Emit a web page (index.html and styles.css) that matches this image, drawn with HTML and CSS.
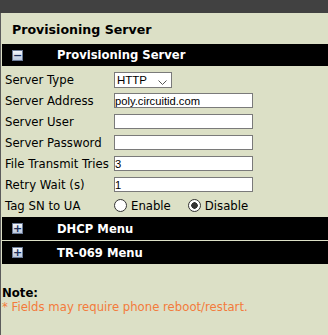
FILE: index.html
```html
<!DOCTYPE html>
<html lang="en">
<head>
  <meta charset="UTF-8" />
  <title>Provisioning Server</title>
  <link rel="stylesheet" href="styles.css">
</head>
<body>

  <div class="topbar"></div>

  <div class="page">
    <h1 class="page-title">Provisioning Server</h1>

    <div class="menu-bar">
      <span class="toggle">&minus;</span>
      <span class="menu-title">Provisioning Server</span>
    </div>

    <div class="form">
      <div class="row">
        <label>Server Type</label>
        <span class="select-wrap">
          <select class="select">
            <option>HTTP</option>
          </select>
          <svg class="chevron" width="9" height="5" viewBox="0 0 9 5"><path d="M0.5 0.5 L4.5 4.5 L8.5 0.5" fill="none" stroke="#555" stroke-width="1"/></svg>
        </span>
      </div>
      <div class="row">
        <label>Server Address</label>
        <input class="field" type="text" value="poly.circuitid.com">
      </div>
      <div class="row">
        <label>Server User</label>
        <input class="field" type="text" value="">
      </div>
      <div class="row">
        <label>Server Password</label>
        <input class="field" type="text" value="">
      </div>
      <div class="row">
        <label>File Transmit Tries</label>
        <input class="field" type="text" value="3">
      </div>
      <div class="row">
        <label>Retry Wait (s)</label>
        <input class="field" type="text" value="1">
      </div>
      <div class="row">
        <label>Tag SN to UA</label>
        <div class="radios">
          <label class="radio"><input type="radio" name="tagsn"> Enable</label>
          <label class="radio"><input type="radio" name="tagsn" checked> Disable</label>
        </div>
      </div>
    </div>

    <div class="menu-bar menu-small">
      <span class="toggle">+</span>
      <span class="menu-title">DHCP Menu</span>
    </div>
    <div class="menu-bar menu-small">
      <span class="toggle">+</span>
      <span class="menu-title">TR-069 Menu</span>
    </div>

    <div class="note">
      <div class="note-title">Note:</div>
      <div class="note-text">* Fields may require phone reboot/restart.</div>
    </div>
  </div>

</body>
</html>
```

FILE: styles.css
```css
html, body {
  margin: 0;
  padding: 0;
  height: 100%;
  background-color: #dce0c6;
  font-family: 'DejaVu Sans', Verdana, sans-serif;
  font-size: 11.7px;
  color: #000;
  overflow: hidden;
}

.topbar {
  height: 13px;
  background-color: #414141;
}

.page {
  border-left: 1px solid #5c5c5c;
  padding-left: 1px;
  height: 100%;
}

.page-title {
  margin: 0;
  padding: 9px 0 0 10px;
  height: 22px;
  font-size: 12.6px;
  font-weight: bold;
  color: #000;
}

.menu-bar {
  display: flex;
  align-items: center;
  height: 22px;
  background-color: #000;
  color: #fff;
  font-weight: bold;
  font-size: 11.6px;
}

.menu-small {
  height: 23px;
  margin-bottom: 1px;
}

.toggle {
  width: 9px;
  height: 9px;
  margin-left: 10px;
  margin-right: 34px;
  border: 1px solid #6b7a96;
  background: linear-gradient(#f4f7fc, #b9c7de);
  color: #1d2f5c;
  font-size: 11px;
  line-height: 9px;
  text-align: center;
  font-weight: bold;
}

.form {
  padding: 3px 0 1px 3px;
}

.row {
  display: grid;
  grid-template-columns: 109px 1fr;
  align-items: center;
  height: 21px;
}

.field {
  box-sizing: border-box;
  width: 139px;
  height: 15px;
  margin: 0;
  padding: 0 1px 0 0;
  border: 1px solid #7a7a7a;
  background: #fff;
  font-family: 'Liberation Sans', Arial, sans-serif;
  font-size: 11.2px;
  color: #000;
  outline: none;
}

.select-wrap {
  position: relative;
  width: 58px;
  height: 16px;
}

.select {
  appearance: none;
  box-sizing: border-box;
  width: 58px;
  height: 16px;
  margin: 0;
  padding: 0 2px;
  border: 1px solid #7a7a7a;
  border-radius: 0;
  background: #fff;
  font-family: 'Liberation Sans', Arial, sans-serif;
  font-size: 11.5px;
  color: #000;
}

.chevron {
  position: absolute;
  right: 5px;
  top: 8px;
}

.radios {
  display: flex;
  gap: 17px;
}

.radio {
  display: flex;
  align-items: center;
  gap: 4px;
}

.radio input {
  appearance: none;
  width: 13px;
  height: 13px;
  margin: 0;
  border: 1px solid #333;
  border-radius: 50%;
  background: #fff;
}

.radio input:checked {
  background: radial-gradient(circle, #333 0 3px, #fff 3.5px);
}

.note {
  padding: 21px 0 0 0;
}

.note-title {
  font-weight: bold;
}

.note-text {
  color: #f37b3b;
}
```
